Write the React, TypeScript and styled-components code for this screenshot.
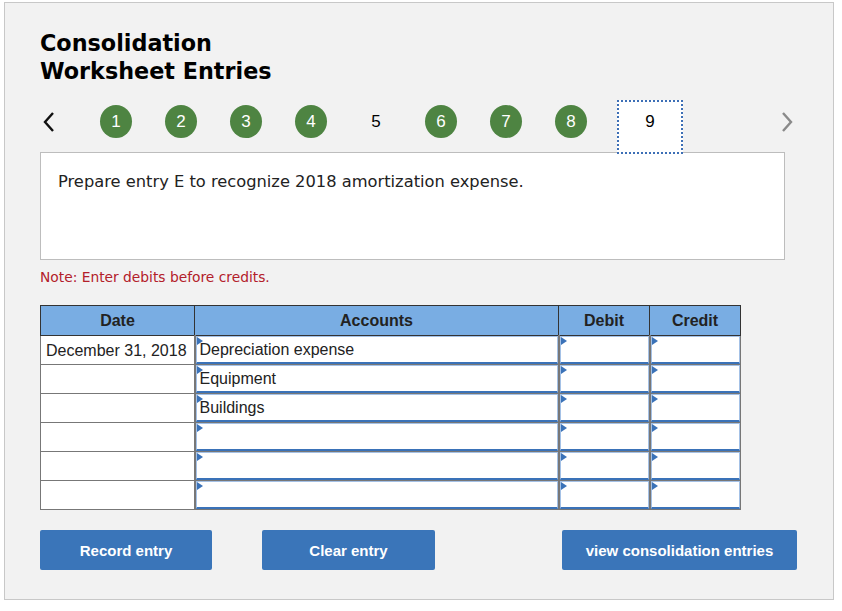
import React, { FC } from 'react';
import styled, { createGlobalStyle } from 'styled-components';

const GlobalStyle = createGlobalStyle`
  body {
    margin: 0;
    background: #ffffff;
    font-family: 'Liberation Sans', Arial, sans-serif;
  }
`;

type Step = { label: string; done?: boolean; current?: boolean };

const steps: Step[] = [
  { label: '1', done: true },
  { label: '2', done: true },
  { label: '3', done: true },
  { label: '4', done: true },
  { label: '5' },
  { label: '6', done: true },
  { label: '7', done: true },
  { label: '8', done: true },
  { label: '9', current: true },
];

type Row = { date: string; account: string };

const rows: Row[] = [
  { date: 'December 31, 2018', account: 'Depreciation expense' },
  { date: '', account: 'Equipment' },
  { date: '', account: 'Buildings' },
  { date: '', account: '' },
  { date: '', account: '' },
  { date: '', account: '' },
];

const App: FC = () => {
  return (
    <>
      <GlobalStyle />
      <Panel>
        <Title>
          Consolidation
          <br />
          Worksheet Entries
        </Title>
        <Nav>
          <Arrow>
            <svg width="14" height="22" viewBox="0 0 14 22">
              <polyline points="11,2 3,11 11,20" fill="none" stroke="#111" strokeWidth="2.4" />
            </svg>
          </Arrow>
          <Steps>
            {steps.map((s) =>
              s.current ? (
                <CurrentStep key={s.label}>{s.label}</CurrentStep>
              ) : (
                <StepDot key={s.label} done={!!s.done}>
                  {s.label}
                </StepDot>
              )
            )}
          </Steps>
          <Arrow right>
            <svg width="14" height="22" viewBox="0 0 14 22">
              <polyline points="3,2 11,11 3,20" fill="none" stroke="#8a8a8a" strokeWidth="2.4" />
            </svg>
          </Arrow>
        </Nav>
        <Prompt>Prepare entry E to recognize 2018 amortization expense.</Prompt>
        <Note>Note: Enter debits before credits.</Note>
        <Table>
          <colgroup>
            <col style={{ width: 154 }} />
            <col style={{ width: 364 }} />
            <col style={{ width: 91 }} />
            <col style={{ width: 91 }} />
          </colgroup>
          <thead>
            <tr>
              <Th>Date</Th>
              <Th>Accounts</Th>
              <Th>Debit</Th>
              <Th>Credit</Th>
            </tr>
          </thead>
          <tbody>
            {rows.map((r, i) => (
              <tr key={i}>
                <DateCell>{r.date}</DateCell>
                <InputCell>
                  <Field>{r.account}</Field>
                </InputCell>
                <InputCell>
                  <Field />
                </InputCell>
                <InputCell>
                  <Field />
                </InputCell>
              </tr>
            ))}
          </tbody>
        </Table>
        <Buttons>
          <Button width={172}>Record entry</Button>
          <Button width={173}>Clear entry</Button>
          <Button width={235} push>
            view consolidation entries
          </Button>
        </Buttons>
      </Panel>
    </>
  );
};

const Panel = styled.div`
  box-sizing: border-box;
  margin: 2px 0 0 4px;
  width: 830px;
  height: 598px;
  padding: 26px 0 0 35px;
  background: #f2f2f2;
  border: 1px solid #c8c8c8;
`;

const Title = styled.h1`
  margin: 0;
  font-family: 'DejaVu Sans', Verdana, sans-serif;
  font-weight: bold;
  font-size: 22.3px;
  line-height: 28px;
  color: #000;
`;

const Nav = styled.div`
  display: flex;
  align-items: flex-start;
  width: 754px;
  height: 51px;
  margin-top: 16px;
  position: relative;
  z-index: 1;
`;

const Arrow = styled.div<{ right?: boolean }>`
  display: flex;
  align-items: center;
  height: 34px;
  margin-top: 4px;
  margin-left: ${(p) => (p.right ? 'auto' : '2px')};
`;

const Steps = styled.div`
  display: flex;
  align-items: flex-start;
  gap: 33px;
  margin-left: 44px;
`;

const StepDot = styled.div<{ done: boolean }>`
  width: 32px;
  height: 33px;
  margin-top: 4px;
  border-radius: 50%;
  background: ${(p) => (p.done ? '#4e8442' : 'transparent')};
  color: ${(p) => (p.done ? '#ffffff' : '#000000')};
  display: flex;
  align-items: center;
  justify-content: center;
  font-size: 17px;
`;

const CurrentStep = styled.div`
  box-sizing: border-box;
  width: 66px;
  height: 54px;
  margin-top: -1px;
  margin-left: -3px;
  padding-bottom: 10px;
  background: #ffffff;
  border: 2px dotted #3d6fb6;
  display: flex;
  align-items: center;
  justify-content: center;
  font-size: 17px;
  color: #000;
`;

const Prompt = styled.div`
  box-sizing: border-box;
  width: 745px;
  height: 108px;
  padding: 19px 0 0 17px;
  background: #ffffff;
  border: 1px solid #bdbdbd;
  font-family: 'DejaVu Sans', Verdana, sans-serif;
  font-size: 16.3px;
  color: #222;
`;

const Note = styled.p`
  margin: 8px 0 0;
  font-family: 'DejaVu Sans', Verdana, sans-serif;
  font-size: 13.8px;
  line-height: 18px;
  color: #b3202a;
`;

const Table = styled.table`
  margin-top: 19px;
  width: 701px;
  border-collapse: collapse;
  table-layout: fixed;
  font-size: 16px;
  color: #222;
`;

const Th = styled.th`
  height: 29px;
  padding: 0;
  background: #79ade3;
  border: 1px solid #333;
  font-weight: bold;
  text-align: center;
`;

const DateCell = styled.td`
  height: 26px;
  padding: 2px 0 0 5px;
  background: #ffffff;
  border: 1px solid #777;
  white-space: nowrap;
`;

const InputCell = styled.td`
  height: 28px;
  padding: 0;
  border: 1px solid #777;
  border-left-width: 2px;
  background: #ffffff;
`;

const Field = styled.div`
  position: relative;
  box-sizing: border-box;
  height: 28px;
  padding: 0 0 0 3px;
  line-height: 25px;
  border: 1px solid #a4c1e6;
  border-bottom: 2px solid #3a72b8;
  background: #ffffff;
  &::before {
    content: '';
    position: absolute;
    left: 0;
    top: 0;
    border-top: 4px solid transparent;
    border-bottom: 4px solid transparent;
    border-left: 6px solid #3a72b8;
  }
`;

const Buttons = styled.div`
  display: flex;
  width: 757px;
  margin-top: 20px;
  gap: 50px;
`;

const Button = styled.button<{ width: number; push?: boolean }>`
  width: ${(p) => p.width}px;
  height: 40px;
  margin-left: ${(p) => (p.push ? 'auto' : '0')};
  border: none;
  border-radius: 2px;
  background: #3a75b9;
  color: #ffffff;
  font-family: 'Liberation Sans', Arial, sans-serif;
  font-weight: bold;
  font-size: 15px;
  cursor: pointer;
`;

export default App;
